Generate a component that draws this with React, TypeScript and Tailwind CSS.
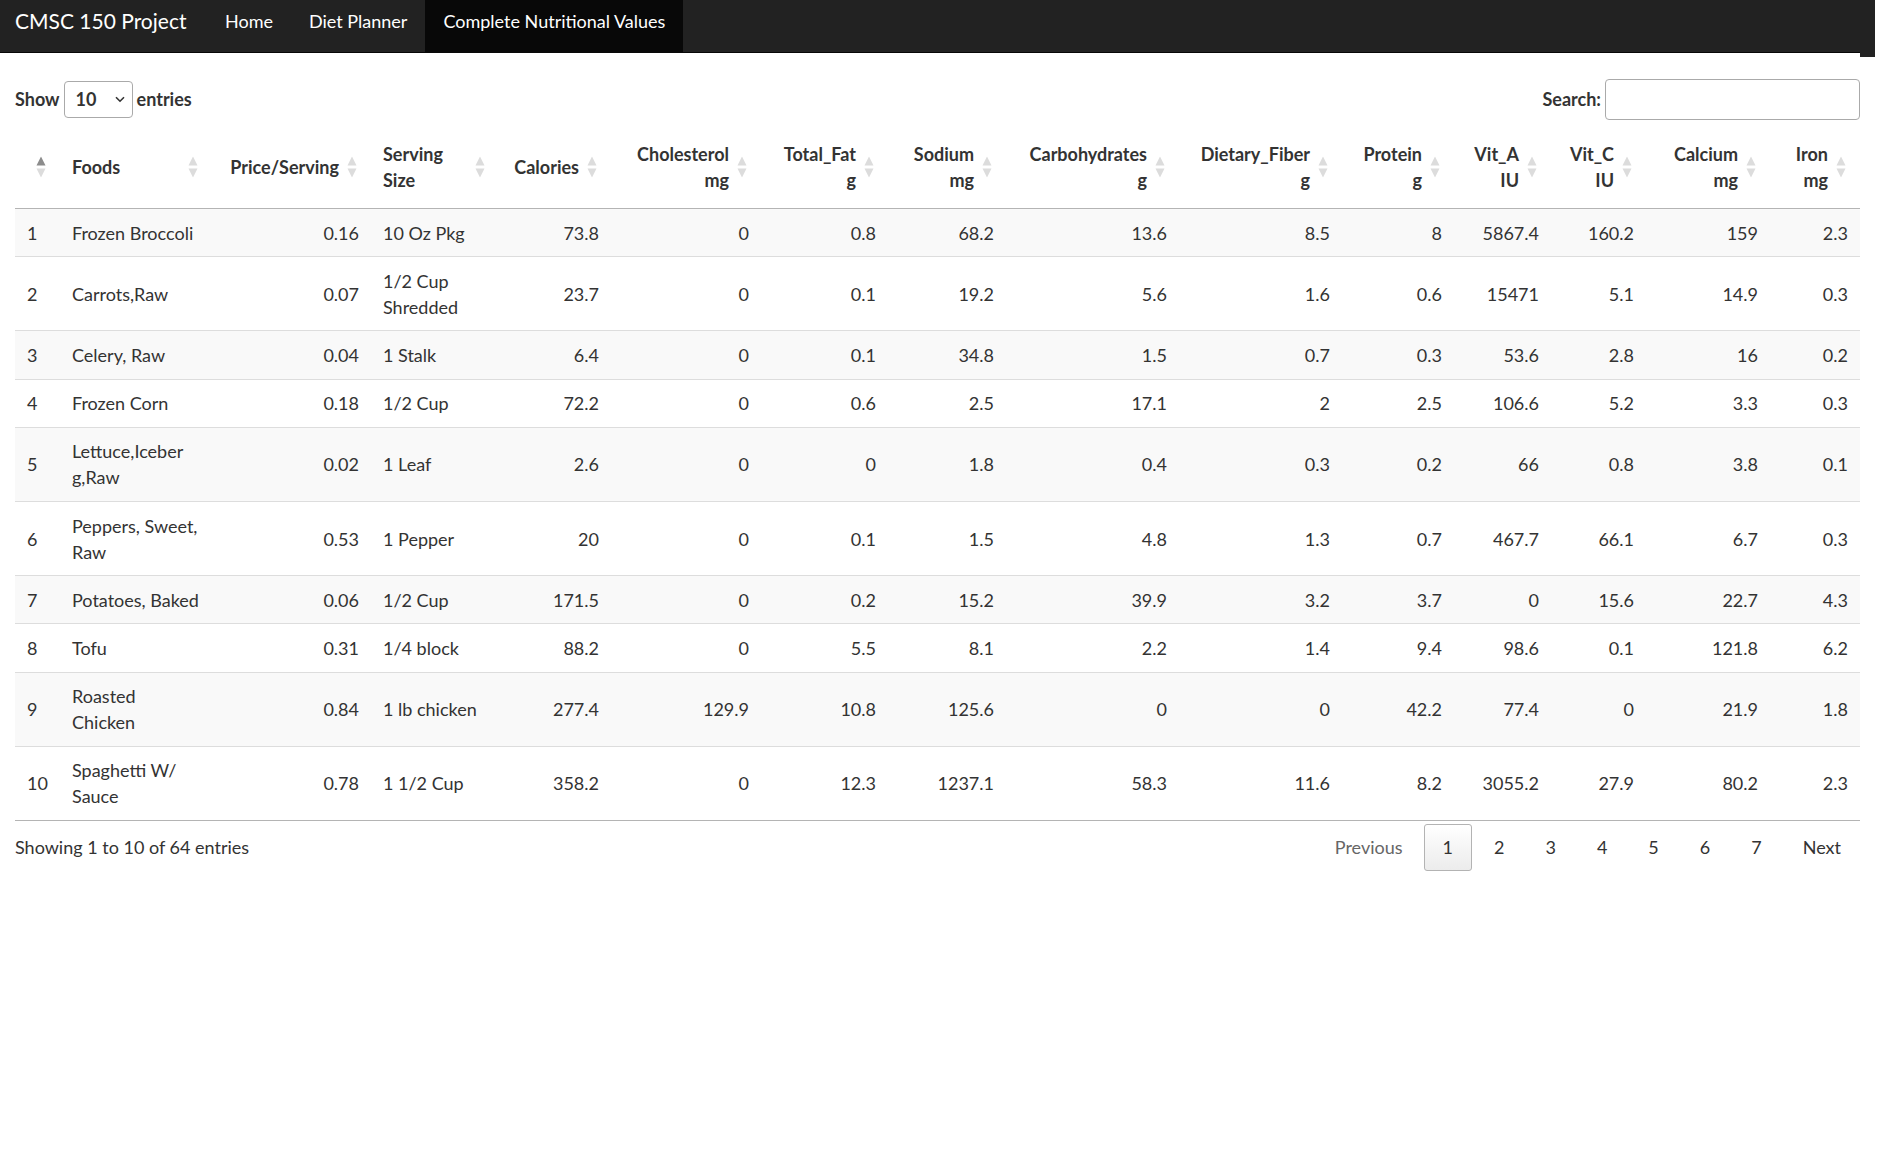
import React from 'react';

type Row = {
  food: string;
  price: string;
  serving: string;
  vals: string[];
};

const rows: Row[] = [
  { food: 'Frozen Broccoli', price: '0.16', serving: '10 Oz Pkg', vals: ['73.8', '0', '0.8', '68.2', '13.6', '8.5', '8', '5867.4', '160.2', '159', '2.3'] },
  { food: 'Carrots,Raw', price: '0.07', serving: '1/2 Cup\nShredded', vals: ['23.7', '0', '0.1', '19.2', '5.6', '1.6', '0.6', '15471', '5.1', '14.9', '0.3'] },
  { food: 'Celery, Raw', price: '0.04', serving: '1 Stalk', vals: ['6.4', '0', '0.1', '34.8', '1.5', '0.7', '0.3', '53.6', '2.8', '16', '0.2'] },
  { food: 'Frozen Corn', price: '0.18', serving: '1/2 Cup', vals: ['72.2', '0', '0.6', '2.5', '17.1', '2', '2.5', '106.6', '5.2', '3.3', '0.3'] },
  { food: 'Lettuce,Iceber\ng,Raw', price: '0.02', serving: '1 Leaf', vals: ['2.6', '0', '0', '1.8', '0.4', '0.3', '0.2', '66', '0.8', '3.8', '0.1'] },
  { food: 'Peppers, Sweet,\nRaw', price: '0.53', serving: '1 Pepper', vals: ['20', '0', '0.1', '1.5', '4.8', '1.3', '0.7', '467.7', '66.1', '6.7', '0.3'] },
  { food: 'Potatoes, Baked', price: '0.06', serving: '1/2 Cup', vals: ['171.5', '0', '0.2', '15.2', '39.9', '3.2', '3.7', '0', '15.6', '22.7', '4.3'] },
  { food: 'Tofu', price: '0.31', serving: '1/4 block', vals: ['88.2', '0', '5.5', '8.1', '2.2', '1.4', '9.4', '98.6', '0.1', '121.8', '6.2'] },
  { food: 'Roasted\nChicken', price: '0.84', serving: '1 lb chicken', vals: ['277.4', '129.9', '10.8', '125.6', '0', '0', '42.2', '77.4', '0', '21.9', '1.8'] },
  { food: 'Spaghetti W/\nSauce', price: '0.78', serving: '1 1/2 Cup', vals: ['358.2', '0', '12.3', '1237.1', '58.3', '11.6', '8.2', '3055.2', '27.9', '80.2', '2.3'] },
];

// numeric headers after "Serving Size"
const numHeaders: string[][] = [
  ['Calories'],
  ['Cholesterol', 'mg'],
  ['Total_Fat', 'g'],
  ['Sodium', 'mg'],
  ['Carbohydrates', 'g'],
  ['Dietary_Fiber', 'g'],
  ['Protein', 'g'],
  ['Vit_A', 'IU'],
  ['Vit_C', 'IU'],
  ['Calcium', 'mg'],
  ['Iron', 'mg'],
];

const SortIcon: React.FC<{ active?: boolean }> = ({ active }) => (
  <svg
    className="absolute right-[14px] top-1/2 -translate-y-1/2"
    width="10"
    height="21"
    viewBox="0 0 10 21"
  >
    <polygon points="5,0 9.5,9 0.5,9" fill={active ? '#8c8c8c' : '#dcdcdc'} />
    <polygon points="0.5,12 9.5,12 5,21" fill="#dcdcdc" />
  </svg>
);

const thBase = 'relative py-[15px] pl-[12px] pr-[32px] font-bold align-middle leading-[26px]';
const tdBase = 'py-[10.6px] px-[12px] align-middle leading-[26px] whitespace-pre-line';

const App: React.FC = () => {
  return (
    <div className="min-h-[1176px] bg-white font-[Lato,sans-serif] text-[18px] text-[#333]">
      {/* navbar */}
      <div className="flex items-start">
        <div className="flex h-[53px] w-[1860px] border-b border-[#080808] bg-[#222]">
          <div className="w-[207px] pl-[15px] pt-[7px] text-[21px] leading-[28px] text-white">CMSC 150 Project</div>
          <a className="h-[52px] px-[18px] pt-[8px] leading-[26px] text-white">Home</a>
          <a className="h-[52px] px-[18px] pt-[8px] leading-[26px] text-white">Diet Planner</a>
          <a className="h-[52px] bg-[#080808] px-[18px] pt-[8px] leading-[26px] text-white">Complete Nutritional Values</a>
        </div>
        <div className="h-[57px] w-[15px] bg-[#222]" />
      </div>

      <div className="w-[1875px] px-[15px] pt-[22px]">
        {/* controls */}
        <div className="flex h-[41px] items-center justify-between">
          <div className="flex items-center font-bold">
            <span>Show</span>
            <div className="relative mx-[4px] h-[37px] w-[69px]">
              <select className="h-full w-full appearance-none rounded-[4px] border border-[#aaa] bg-white pl-[11px] font-bold text-[#333]">
                <option>10</option>
                <option>25</option>
                <option>50</option>
                <option>100</option>
              </select>
              <svg className="pointer-events-none absolute right-[8px] top-[15px]" width="10" height="7" viewBox="0 0 10 7">
                <path d="M1 1.2 L5 5.2 L9 1.2" fill="none" stroke="#333" strokeWidth="1.6" />
              </svg>
            </div>
            <span>entries</span>
          </div>
          <div className="flex items-center font-bold">
            <span className="mr-[4px]">Search:</span>
            <input className="h-[41px] w-[255px] rounded-[4px] border border-[#aaa] bg-white px-[8px] outline-none" />
          </div>
        </div>

        {/* table */}
        <table className="mt-[6px] w-[1845px] table-fixed border-collapse">
          <colgroup>
            <col className="w-[45px]" />
            <col className="w-[152px]" />
            <col className="w-[159px]" />
            <col className="w-[128px]" />
            <col className="w-[112px]" />
            <col className="w-[150px]" />
            <col className="w-[127px]" />
            <col className="w-[118px]" />
            <col className="w-[173px]" />
            <col className="w-[163px]" />
            <col className="w-[112px]" />
            <col className="w-[97px]" />
            <col className="w-[95px]" />
            <col className="w-[124px]" />
            <col className="w-[90px]" />
          </colgroup>
          <thead>
            <tr className="border-b border-[#b4b4b4]">
              <th className={`${thBase} text-left`}>
                <SortIcon active />
              </th>
              <th className={`${thBase} text-left`}>
                Foods
                <SortIcon />
              </th>
              <th className={`${thBase} text-right`}>
                Price/Serving
                <SortIcon />
              </th>
              <th className={`${thBase} text-left`}>
                Serving
                <br />
                Size
                <SortIcon />
              </th>
              {numHeaders.map((h, i) => (
                <th key={i} className={`${thBase} text-right`}>
                  {h.map((line, j) => (
                    <div key={j}>{line}</div>
                  ))}
                  <SortIcon />
                </th>
              ))}
            </tr>
          </thead>
          <tbody className="border-b border-[#b4b4b4]">
            {rows.map((r, i) => (
              <tr key={i} className={`${i > 0 ? 'border-t border-[#ddd]' : ''} ${i % 2 === 0 ? 'bg-[#f9f9f9]' : 'bg-white'}`}>
                <td className={`${tdBase} text-left`}>{i + 1}</td>
                <td className={`${tdBase} text-left`}>{r.food}</td>
                <td className={`${tdBase} text-right`}>{r.price}</td>
                <td className={`${tdBase} text-left`}>{r.serving}</td>
                {r.vals.map((v, j) => (
                  <td key={j} className={`${tdBase} text-right`}>
                    {v}
                  </td>
                ))}
              </tr>
            ))}
          </tbody>
        </table>

        {/* footer */}
        <div className="mt-[3px] flex h-[47px] w-[1845px] items-center justify-between">
          <div>Showing 1 to 10 of 64 entries</div>
          <div className="flex items-center">
            <span className="flex h-[47px] items-center px-[19px] text-[#666]">Previous</span>
            <span className="ml-[2px] flex h-[47px] items-center rounded-[3px] border border-[#b3b3b3] bg-linear-to-b from-white to-[#ececec] px-[18px]">
              1
            </span>
            {['2', '3', '4', '5', '6', '7'].map((p) => (
              <span key={p} className="ml-[3px] flex h-[47px] items-center px-[19px]">
                {p}
              </span>
            ))}
            <span className="ml-[3px] flex h-[47px] items-center px-[19px]">Next</span>
          </div>
        </div>
      </div>
    </div>
  );
};

export default App;
